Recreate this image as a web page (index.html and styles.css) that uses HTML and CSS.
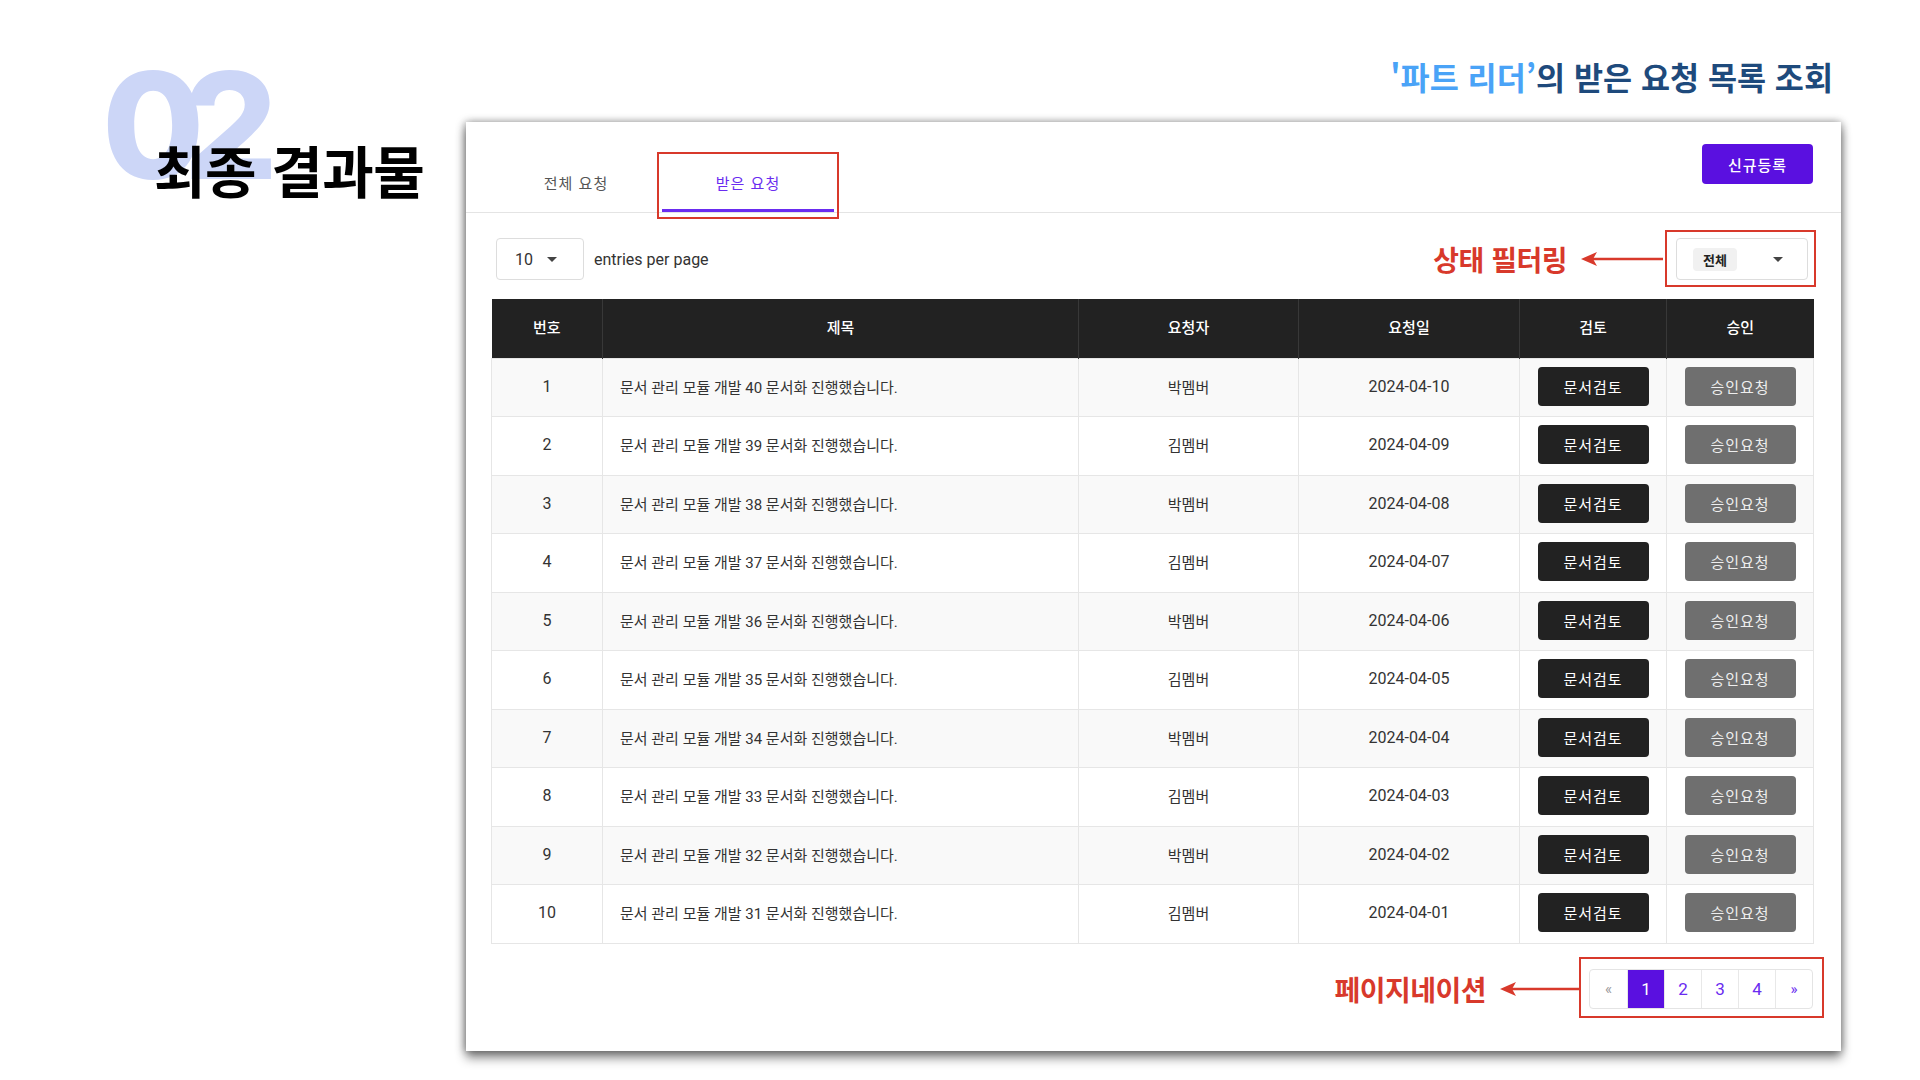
FILE: index.html
```html
<!DOCTYPE html>
<html lang="ko">
<head>
<meta charset="utf-8">
<title>최종 결과물</title>
<link rel="stylesheet" href="styles.css">
</head>
<body>
<div class="slide">
  <div class="intro">
    <div class="num">02</div>
    <h1 class="intro-title">최종 결과물</h1>
  </div>
  <div class="main">
    <h2 class="page-title"><span class="hl">'파트 리더’</span>의 받은 요청 목록 조회</h2>
    <div class="card">
      <div class="tabbar">
        <div class="tabs">
          <div class="tab">전체 요청</div>
          <div class="tab active">받은 요청<span class="mark mark-tab"></span></div>
        </div>
        <button class="btn-new">신규등록</button>
      </div>
      <div class="toolbar">
        <div class="entries">
          <div class="select sm"><span>10</span><span class="caret"></span></div>
          <span class="entries-label">entries per page</span>
        </div>
        <div class="filter">
          <div class="note note-filter">
            <span class="note-text">상태 필터링</span>
            <svg class="arrow" width="82" height="14" viewBox="0 0 82 14"><path d="M0 7 L16 0 L12 7 L16 14 Z" fill="#d8392b"/><path d="M12 7 H82" stroke="#d8392b" stroke-width="2.4"/></svg>
          </div>
          <div class="select lg"><span class="chip">전체</span><span class="caret"></span></div>
          <span class="mark mark-filter"></span>
        </div>
      </div>
      <table class="grid">
        <thead>
          <tr><th class="c-no">번호</th><th class="c-title">제목</th><th class="c-user">요청자</th><th class="c-date">요청일</th><th class="c-btn">검토</th><th class="c-btn">승인</th></tr>
        </thead>
        <tbody>
          <tr><td class="n">1</td><td class="t-left">문서 관리 모듈 개발 40 문서화 진행했습니다.</td><td>박멤버</td><td class="n">2024-04-10</td><td><button class="btn dark">문서검토</button></td><td><button class="btn grey">승인요청</button></td></tr>
          <tr><td class="n">2</td><td class="t-left">문서 관리 모듈 개발 39 문서화 진행했습니다.</td><td>김멤버</td><td class="n">2024-04-09</td><td><button class="btn dark">문서검토</button></td><td><button class="btn grey">승인요청</button></td></tr>
          <tr><td class="n">3</td><td class="t-left">문서 관리 모듈 개발 38 문서화 진행했습니다.</td><td>박멤버</td><td class="n">2024-04-08</td><td><button class="btn dark">문서검토</button></td><td><button class="btn grey">승인요청</button></td></tr>
          <tr><td class="n">4</td><td class="t-left">문서 관리 모듈 개발 37 문서화 진행했습니다.</td><td>김멤버</td><td class="n">2024-04-07</td><td><button class="btn dark">문서검토</button></td><td><button class="btn grey">승인요청</button></td></tr>
          <tr><td class="n">5</td><td class="t-left">문서 관리 모듈 개발 36 문서화 진행했습니다.</td><td>박멤버</td><td class="n">2024-04-06</td><td><button class="btn dark">문서검토</button></td><td><button class="btn grey">승인요청</button></td></tr>
          <tr><td class="n">6</td><td class="t-left">문서 관리 모듈 개발 35 문서화 진행했습니다.</td><td>김멤버</td><td class="n">2024-04-05</td><td><button class="btn dark">문서검토</button></td><td><button class="btn grey">승인요청</button></td></tr>
          <tr><td class="n">7</td><td class="t-left">문서 관리 모듈 개발 34 문서화 진행했습니다.</td><td>박멤버</td><td class="n">2024-04-04</td><td><button class="btn dark">문서검토</button></td><td><button class="btn grey">승인요청</button></td></tr>
          <tr><td class="n">8</td><td class="t-left">문서 관리 모듈 개발 33 문서화 진행했습니다.</td><td>김멤버</td><td class="n">2024-04-03</td><td><button class="btn dark">문서검토</button></td><td><button class="btn grey">승인요청</button></td></tr>
          <tr><td class="n">9</td><td class="t-left">문서 관리 모듈 개발 32 문서화 진행했습니다.</td><td>박멤버</td><td class="n">2024-04-02</td><td><button class="btn dark">문서검토</button></td><td><button class="btn grey">승인요청</button></td></tr>
          <tr><td class="n">10</td><td class="t-left">문서 관리 모듈 개발 31 문서화 진행했습니다.</td><td>김멤버</td><td class="n">2024-04-01</td><td><button class="btn dark">문서검토</button></td><td><button class="btn grey">승인요청</button></td></tr>
        </tbody>
      </table>
      <div class="footer">
        <div class="pager-wrap">
          <div class="note note-pager">
            <span class="note-text">페이지네이션</span>
            <svg class="arrow" width="80" height="14" viewBox="0 0 80 14"><path d="M0 7 L16 0 L12 7 L16 14 Z" fill="#d8392b"/><path d="M12 7 H80" stroke="#d8392b" stroke-width="2.4"/></svg>
          </div>
          <ul class="pager">
            <li class="disabled">«</li>
            <li class="current">1</li>
            <li>2</li>
            <li>3</li>
            <li>4</li>
            <li class="next">»</li>
          </ul>
          <span class="mark mark-pager"></span>
        </div>
      </div>
    </div>
  </div>
</div>
</body>
</html>
```
FILE: styles.css
```css
* { box-sizing: border-box; }
html, body { margin: 0; padding: 0; background: #fff; }
body { font-family: "Roboto", "Noto Sans CJK KR", sans-serif; color: #333; }

.slide { display: flex; width: 1920px; height: 1080px; overflow: hidden; }

/* left intro */
.intro { width: 466px; padding: 52px 0 0 102px; flex: none; }
.num {
  font-family: "Inter", "Roboto", sans-serif;
  font-weight: 800;
  font-size: 148px;
  line-height: 148px;
  letter-spacing: -21px;
  color: #ccd6f7;
}
.intro-title {
  margin: -66px 0 0 52px;
  font-family: "Noto Sans CJK KR", sans-serif;
  font-weight: 700;
  font-size: 56px;
  line-height: 70px;
  letter-spacing: -0.5px;
  color: #000;
}

/* main */
.main { flex: none; width: 1375px; display: flex; flex-direction: column; }
.page-title {
  margin: 54px 0 0 0;
  padding-right: 8px;
  text-align: right;
  font-family: "Noto Sans CJK KR", sans-serif;
  font-weight: 700;
  font-size: 31.6px;
  line-height: 44px;
  color: #1e4a7c;
}
.page-title .hl { color: #4aa3f7; }

.card {
  margin-top: 24px;
  height: 929px;
  background: #fff;
  box-shadow: 0 7px 10px rgba(0,0,0,0.45), -2px 0 8px rgba(0,0,0,0.25), 2px 0 8px rgba(0,0,0,0.2);
  padding: 0 28px 0 25px;
  display: flex;
  flex-direction: column;
}

.tabbar {
  display: flex;
  justify-content: space-between;
  align-items: flex-start;
  border-bottom: 1px solid #e4e4e4;
  margin: 0 -28px 0 -25px;
  padding: 0 28px 0 24px;
  height: 91px;
}
.tabs { display: flex; margin-top: 30px; }
.tab {
  position: relative;
  width: 172px;
  height: 60px;
  display: flex;
  align-items: center;
  justify-content: center;
  padding-bottom: 0;
  font-family: "Noto Sans CJK KR", sans-serif;
  font-size: 15px;
  letter-spacing: 1px;
  color: #555;
}
.tab.active { color: #6a2cf0; border-bottom: 3px solid #6a2cf0; padding-bottom: 0; padding-top: 3px; }

.btn-new {
  margin-top: 22px;
  width: 111px;
  height: 40px;
  border: 0;
  border-radius: 4px;
  background: #5a10e0;
  color: #fff;
  font-family: "Noto Sans CJK KR", sans-serif;
  font-size: 15px;
  font-weight: 500;
  letter-spacing: 1px;
}

.mark { position: absolute; border: 2px solid #d8392b; pointer-events: none; }
.mark-tab { left: -5px; right: -5px; top: 0; bottom: -10px; }

.toolbar {
  display: flex;
  justify-content: space-between;
  align-items: center;
  padding: 25px 5px 19px 5px;
}
.entries { display: flex; align-items: center; gap: 10px; }
.select {
  display: flex;
  align-items: center;
  border: 1px solid #ddd;
  border-radius: 4px;
  background: #fff;
}
.select.sm { width: 88px; height: 42px; padding: 0 0 0 18px; gap: 14px; font-size: 16px; color: #333; }
.select.lg { width: 132px; height: 42px; padding: 0 24px 0 16px; justify-content: space-between; }
.caret { width: 0; height: 0; border-left: 5px solid transparent; border-right: 5px solid transparent; border-top: 5px solid #444; }
.entries-label { font-size: 16px; color: #333; }
.chip {
  background: #f1f1f1;
  border-radius: 4px;
  padding: 2px 10px;
  font-family: "Noto Sans CJK KR", sans-serif;
  font-size: 13px;
  font-weight: 700;
  color: #222;
}
.filter { position: relative; }
.mark-filter { left: -11px; right: -8px; top: -8px; bottom: -7px; }
.note {
  position: absolute;
  display: flex;
  align-items: center;
  gap: 14px;
  white-space: nowrap;
}
.note-text {
  font-family: "Noto Sans CJK KR", sans-serif;
  font-weight: 700;
  font-size: 28px;
  color: #d8392b;
  letter-spacing: -0.5px;
}
.note-filter { right: 145px; top: 0; height: 42px; }
.note-pager { right: 233px; top: 0; height: 40px; }

/* table */
.grid { width: 1322px; border-collapse: collapse; table-layout: fixed; font-size: 15px; }
.grid th {
  height: 59px;
  padding: 0 0 3px 0;
  background: #222;
  color: #fff;
  font-family: "Noto Sans CJK KR", sans-serif;
  font-weight: 500;
  font-size: 15px;
  border-left: 1px solid #383838;
}
.grid th:first-child { border-left: 0; }
.c-no { width: 111px; }
.c-title { width: 476px; }
.c-user { width: 220px; }
.c-date { width: 221px; }
.c-btn { width: 147px; }
.grid td {
  height: 58.5px;
  border: 1px solid #e6e6e6;
  text-align: center;
  color: #333;
  padding: 0 0 2px 0;
}
.grid td.n { font-size: 16px; }
.grid tbody tr:nth-child(odd) td { background: #f9f9f9; }
.grid td.t-left { text-align: left; padding-left: 17px; }
.btn {
  width: 111px;
  height: 39px;
  border: 0;
  border-radius: 4px;
  font-family: "Noto Sans CJK KR", sans-serif;
  font-size: 15px;
  letter-spacing: 1px;
  vertical-align: middle;
}
.btn.dark { background: #222; color: #fff; }
.btn.grey { background: #6f6f6f; color: #eee; }

/* footer */
.footer { display: flex; justify-content: flex-end; padding-top: 25px; }
.pager-wrap { position: relative; }
.pager {
  display: flex;
  list-style: none;
  margin: 0;
  padding: 0;
  border: 1px solid #e4e4e4;
  border-radius: 4px;
  height: 40px;
}
.pager li {
  width: 37px;
  display: flex;
  align-items: center;
  justify-content: center;
  border-left: 1px solid #e8e8e8;
  font-size: 17px;
  color: #6a2cf0;
}
.pager li:first-child { border-left: 0; }
.pager li.disabled { color: #999; font-size: 15px; }
.pager li.next { font-size: 15px; }
.pager li.current { background: #5a10e0; color: #fff; }
.mark-pager { left: -10px; right: -11px; top: -12px; bottom: -9px; }
```
